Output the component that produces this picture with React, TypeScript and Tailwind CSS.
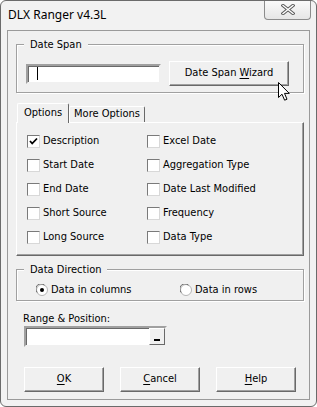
import React from "react";

const font = { fontFamily: '"DejaVu Sans Condensed", "Liberation Sans", Arial, sans-serif' };

const CheckBox = ({ label, checked }: { label: string; checked?: boolean }) => (
  <div className="flex items-center h-[24px] gap-[3px]">
    <span className="w-[13px] h-[13px] bg-white border border-t-[#7a7a7a] border-l-[#7a7a7a] border-r-[#d8d8d8] border-b-[#d8d8d8] flex items-center justify-center">
      {checked && (
        <svg width="11" height="11" viewBox="0 0 11 11">
          <polyline points="2,5 4.2,7.5 9,2.5" fill="none" stroke="#000" strokeWidth="1.8" />
        </svg>
      )}
    </span>
    <span>{label}</span>
  </div>
);

const Radio = ({ label, checked }: { label: string; checked?: boolean }) => (
  <div className="flex items-center gap-[3px]">
    <svg width="12" height="12" viewBox="0 0 12 12">
      <circle cx="6" cy="6" r="5.5" fill="#fff" stroke="#b4b4b4" />
      <path d="M1.3 8.5 A5 5 0 0 1 8.5 1.3" fill="none" stroke="#6a6a6a" />
      {checked && <circle cx="6" cy="6" r="2" fill="#000" />}
    </svg>
    <span>{label}</span>
  </div>
);

const Button = ({ children, w }: { children: React.ReactNode; w: string }) => (
  <div
    className={`${w} h-[25px] flex items-center justify-center bg-[#f0f0f0] border border-t-white border-l-white border-r-[#696969] border-b-[#696969] shadow-[inset_-1px_-1px_0_#a0a0a0]`}
  >
    {children}
  </div>
);

const GroupLabel = ({ text }: { text: string }) => (
  <div className="-mt-[7px] ml-[7px] w-fit px-[6px] bg-[#f0f0f0] leading-[13px]">{text}</div>
);

export default function App() {
  return (
    <div
      className="w-[317px] h-[407px] bg-[#f2f2f2] border border-[#6b6b6b] rounded-[6px] flex flex-col text-[11px] text-black overflow-hidden"
      style={font}
    >
      {/* title bar */}
      <div className="h-[29px] flex justify-between shrink-0">
        <div className="pl-[7px] pt-[6px] text-[12px] leading-[15px]" style={{ fontFamily: '"Noto Sans", "Liberation Sans", sans-serif' }}>
          DLX Ranger v4.3L
        </div>
        <div className="mr-[5px] w-[47px] h-[20px] -mt-[1px] rounded-b-[4px] border border-t-0 border-[#8c8c8c] bg-gradient-to-b from-[#fbfbfb] to-[#e6e6e6] flex items-center justify-center">
          <svg width="14" height="11" viewBox="0 0 14 11">
            <path d="M2 1.5 L12 9.5 M12 1.5 L2 9.5" stroke="#5c5c5c" strokeWidth="3.4" strokeLinecap="square" />
            <path d="M2 1.5 L12 9.5 M12 1.5 L2 9.5" stroke="#ffffff" strokeWidth="1.4" strokeLinecap="square" />
          </svg>
        </div>
      </div>

      {/* client area */}
      <div className="ml-[6px] w-[303px] h-[370px] border border-[#9a9a9a] bg-[#f0f0f0] flex flex-col shrink-0">
        {/* Date Span */}
        <div className="relative ml-[8px] mt-[13px] w-[288px] h-[49px] border border-[#a0a0a0] shadow-[inset_1px_1px_0_#fff,1px_1px_0_#fff]">
          <GroupLabel text="Date Span" />
          <div className="flex items-center mt-[10px] ml-[9px] gap-[8px]">
            <div className="w-[135px] h-[20px] bg-white border-2 border-t-[#a0a0a0] border-l-[#a0a0a0] border-r-[#f0f0f0] border-b-[#f0f0f0] shadow-[inset_1px_1px_0_#696969] flex items-center">
              <span className="ml-[9px] w-[1px] h-[13px] bg-black" />
            </div>
            <Button w="w-[120px]">
              <span>
                Date Span <u className="underline-offset-2">W</u>izard
              </span>
            </Button>
          </div>
          {/* mouse pointer */}
          <svg className="absolute left-[261px] top-[37px]" width="14" height="20" viewBox="0 0 14 20">
            <path
              d="M0.5 0.5 L0.5 15.5 L4 12.2 L6.6 18.2 L9 17.2 L6.5 11.4 L11.3 11.4 Z"
              fill="#fff"
              stroke="#000"
              strokeLinejoin="round"
            />
          </svg>
        </div>

        {/* tabs */}
        <div className="flex items-end ml-[9px] mt-[10px] relative z-10">
          <div className="w-[52px] h-[20px] -mb-[1px] bg-[#f0f0f0] border border-b-0 border-t-white border-l-white border-r-[#696969] rounded-t-[2px] flex items-center justify-center pb-[1px]">
            Options
          </div>
          <div className="w-[76px] h-[16px] bg-[#f0f0f0] border border-b-0 border-t-white border-l-white border-r-[#696969] rounded-t-[2px] flex items-center justify-center">
            More Options
          </div>
        </div>
        <div className="ml-[8px] w-[288px] h-[134px] border border-t-white border-l-white border-r-[#696969] border-b-[#696969] shadow-[inset_-1px_-1px_0_#a0a0a0] pt-[6px] pl-[10px] grid grid-cols-[120px_1fr]">
          <div className="flex flex-col">
            <CheckBox label="Description" checked />
            <CheckBox label="Start Date" />
            <CheckBox label="End Date" />
            <CheckBox label="Short Source" />
            <CheckBox label="Long Source" />
          </div>
          <div className="flex flex-col">
            <CheckBox label="Excel Date" />
            <CheckBox label="Aggregation Type" />
            <CheckBox label="Date Last Modified" />
            <CheckBox label="Frequency" />
            <CheckBox label="Data Type" />
          </div>
        </div>

        {/* Data Direction */}
        <div className="ml-[8px] mt-[13px] w-[288px] h-[32px] border border-[#a0a0a0] shadow-[inset_1px_1px_0_#fff,1px_1px_0_#fff]">
          <GroupLabel text="Data Direction" />
          <div className="flex items-center mt-[6px] ml-[19px]">
            <div className="w-[144px]">
              <Radio label="Data in columns" checked />
            </div>
            <Radio label="Data in rows" />
          </div>
        </div>

        {/* Range & Position */}
        <div className="ml-[15px] mt-[11px] leading-[13px]">Range &amp; Position:</div>
        <div className="ml-[16px] mt-[1px] w-[143px] h-[21px] bg-white border-2 border-t-[#a0a0a0] border-l-[#a0a0a0] border-r-[#f0f0f0] border-b-[#f0f0f0] shadow-[inset_1px_1px_0_#696969] flex justify-end">
          <div className="w-[16px] h-[17px] bg-[#f0f0f0] border border-t-white border-l-white border-r-[#696969] border-b-[#696969] flex items-end justify-center pb-[3px]">
            <span className="w-[6px] h-[2px] bg-black" />
          </div>
        </div>

        {/* buttons */}
        <div className="flex ml-[16px] mt-[20px] gap-[16px]">
          <Button w="w-[80px]">
            <span>
              <u className="underline-offset-2">O</u>K
            </span>
          </Button>
          <Button w="w-[80px]">
            <span>
              <u className="underline-offset-2">C</u>ancel
            </span>
          </Button>
          <Button w="w-[80px]">
            <span>
              <u className="underline-offset-2">H</u>elp
            </span>
          </Button>
        </div>
      </div>
    </div>
  );
}
